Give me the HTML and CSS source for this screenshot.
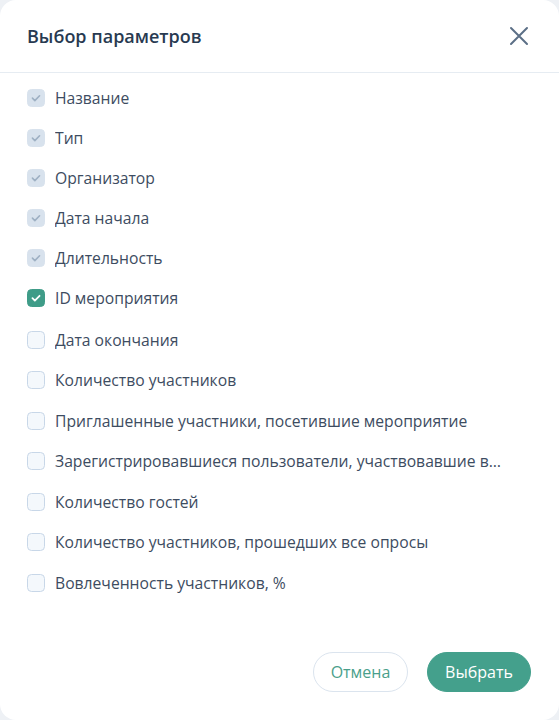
FILE: index.html
```html
<!DOCTYPE html>
<html lang="ru">
<head>
<meta charset="utf-8">
<title>Выбор параметров</title>
<link rel="stylesheet" href="styles.css">
</head>
<body>
<div class="modal">
  <header class="modal-header">
    <h2 class="modal-title">Выбор параметров</h2>
    <button class="close-btn" aria-label="Закрыть">
      <svg width="20" height="20" viewBox="0 0 20 20"><path d="M2 2L18 18M18 2L2 18" stroke="#5b6f86" stroke-width="2" stroke-linecap="round" fill="none"/></svg>
    </button>
  </header>
  <ul class="param-list">
    <li class="param disabled"><span class="box"><svg viewBox="0 0 18 18"><path d="M5 9.2l2.7 2.7L13 6.5" /></svg></span><span class="label">Название</span></li>
    <li class="param disabled"><span class="box"><svg viewBox="0 0 18 18"><path d="M5 9.2l2.7 2.7L13 6.5" /></svg></span><span class="label">Тип</span></li>
    <li class="param disabled"><span class="box"><svg viewBox="0 0 18 18"><path d="M5 9.2l2.7 2.7L13 6.5" /></svg></span><span class="label">Организатор</span></li>
    <li class="param disabled"><span class="box"><svg viewBox="0 0 18 18"><path d="M5 9.2l2.7 2.7L13 6.5" /></svg></span><span class="label">Дата начала</span></li>
    <li class="param disabled"><span class="box"><svg viewBox="0 0 18 18"><path d="M5 9.2l2.7 2.7L13 6.5" /></svg></span><span class="label">Длительность</span></li>
    <li class="param checked"><span class="box"><svg viewBox="0 0 18 18"><path d="M5 9.2l2.7 2.7L13 6.5" /></svg></span><span class="label">ID мероприятия</span></li>
    <li class="param unchecked first-unchecked"><span class="box"></span><span class="label">Дата окончания</span></li>
    <li class="param unchecked"><span class="box"></span><span class="label">Количество участников</span></li>
    <li class="param unchecked"><span class="box"></span><span class="label">Приглашенные участники, посетившие мероприятие</span></li>
    <li class="param unchecked"><span class="box"></span><span class="label">Зарегистрировавшиеся пользователи, участвовавшие в мероприятии</span></li>
    <li class="param unchecked"><span class="box"></span><span class="label">Количество гостей</span></li>
    <li class="param unchecked"><span class="box"></span><span class="label">Количество участников, прошедших все опросы</span></li>
    <li class="param unchecked"><span class="box"></span><span class="label">Вовлеченность участников, %</span></li>
  </ul>
  <footer class="modal-footer">
    <button class="btn btn-outline">Отмена</button>
    <button class="btn btn-primary">Выбрать</button>
  </footer>
</div>
</body>
</html>
```
FILE: styles.css
```css
* { box-sizing: border-box; }
html, body {
  margin: 0;
  padding: 0;
  background: #eef1f5;
  font-family: "Open Sans", "Noto Sans", sans-serif;
}
.modal {
  width: 559px;
  height: 720px;
  background: #ffffff;
  border-radius: 16px;
  display: flex;
  flex-direction: column;
  overflow: hidden;
}
.modal-header {
  height: 73px;
  flex: none;
  display: flex;
  align-items: center;
  justify-content: space-between;
  padding: 0 30px 0 27px;
  border-bottom: 1px solid #e6ecf2;
}
.modal-title {
  margin: 0;
  font-size: 18px;
  font-weight: 600;
  color: #283a51;
}
.close-btn {
  border: none;
  background: none;
  padding: 0;
  width: 20px;
  height: 20px;
  display: flex;
  cursor: pointer;
}
.param-list {
  list-style: none;
  margin: 0;
  padding: 13px 58px 0 27px;
  display: flex;
  flex-direction: column;
  gap: 16px;
  flex: 1;
}
.param {
  height: 24px;
  display: flex;
  align-items: center;
  gap: 10px;
  min-width: 0;
}
.param.unchecked { height: 24.5px; }
.param.first-unchecked { margin-top: 1.5px; }
.box {
  flex: none;
  width: 18px;
  height: 18px;
  border-radius: 4.5px;
  border: 1px solid #c8d7e8;
  background: #f4f8fc;
  display: flex;
  align-items: center;
  justify-content: center;
}
.box svg {
  width: 18px;
  height: 18px;
  fill: none;
  stroke-width: 1.8;
  stroke-linecap: round;
  stroke-linejoin: round;
}
.param.disabled .box {
  background: #d8e2ed;
  border-color: #d8e2ed;
}
.param.disabled .box svg { stroke: #9eb0c3; }
.param.checked .box {
  background: #3f9c88;
  border-color: #3f9c88;
}
.param.checked .box svg { stroke: #ffffff; stroke-width: 2; }
.label {
  font-size: 15.7px;
  color: #3d4c61;
  white-space: nowrap;
  overflow: hidden;
  text-overflow: ellipsis;
  min-width: 0;
}
.modal-footer {
  flex: none;
  display: flex;
  justify-content: flex-end;
  gap: 19px;
  padding: 0 28px 28px 0;
}
.btn {
  height: 40px;
  border-radius: 20px;
  font-family: inherit;
  font-size: 16px;
  padding: 0;
  cursor: pointer;
}
.btn-outline {
  background: #ffffff;
  border: 1px solid #dbe4ee;
  color: #4a9f8b;
  width: 95px;
}
.btn-primary {
  background: #44a08c;
  border: 1px solid #44a08c;
  color: #ffffff;
  width: 104px;
}
```
